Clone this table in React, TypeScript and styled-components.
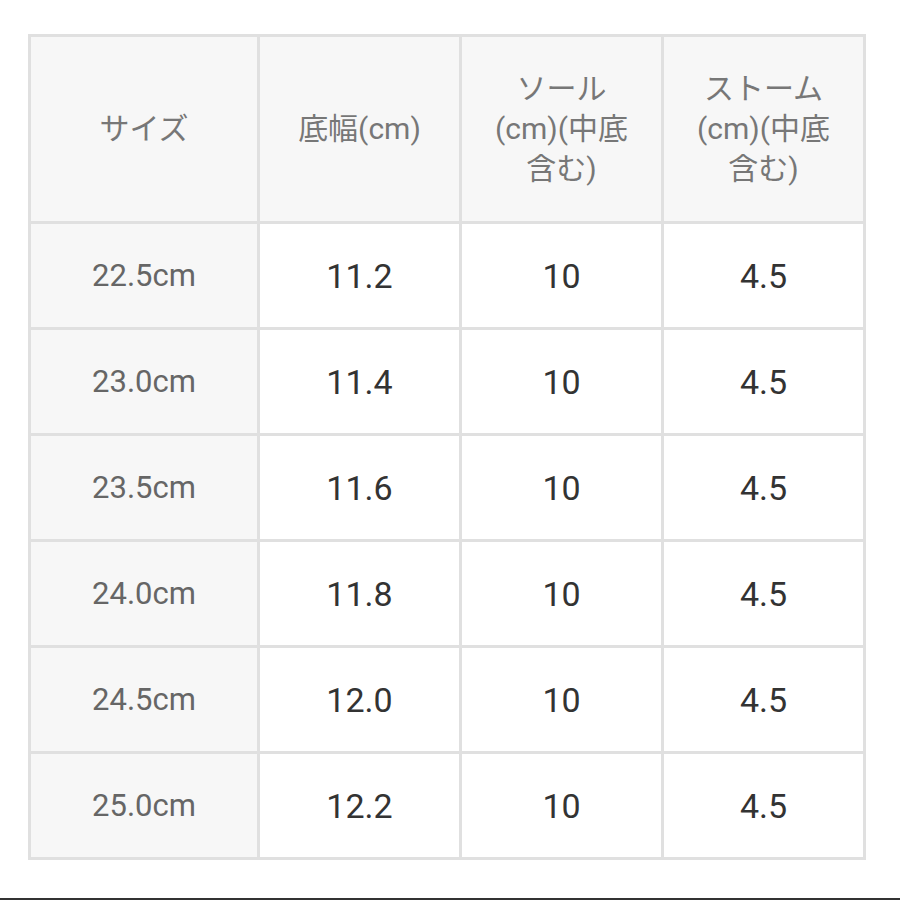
import styled, { createGlobalStyle } from 'styled-components';

const GlobalStyle = createGlobalStyle`
  html, body {
    margin: 0;
    padding: 0;
    background: #ffffff;
  }
  body {
    font-family: Roboto, "Noto Sans CJK JP", "Noto Sans", sans-serif;
  }
`;

const rows = [
  { size: '22.5cm', width: '11.2', sole: '10', storm: '4.5' },
  { size: '23.0cm', width: '11.4', sole: '10', storm: '4.5' },
  { size: '23.5cm', width: '11.6', sole: '10', storm: '4.5' },
  { size: '24.0cm', width: '11.8', sole: '10', storm: '4.5' },
  { size: '24.5cm', width: '12.0', sole: '10', storm: '4.5' },
  { size: '25.0cm', width: '12.2', sole: '10', storm: '4.5' },
];

const App = () => {
  return (
    <Page>
      <GlobalStyle />
      <SizeTable>
        <colgroup>
          <col style={{ width: 229 }} />
          <col style={{ width: 202 }} />
          <col style={{ width: 202 }} />
          <col style={{ width: 202 }} />
        </colgroup>
        <thead>
          <HeadRow>
            <HeadCell>サイズ</HeadCell>
            <HeadCell>底幅(cm)</HeadCell>
            <HeadCell>
              ソール
              <br />
              (cm)(中底
              <br />
              含む)
            </HeadCell>
            <HeadCell>
              ストーム
              <br />
              (cm)(中底
              <br />
              含む)
            </HeadCell>
          </HeadRow>
        </thead>
        <tbody>
          {rows.map((r) => (
            <BodyRow key={r.size}>
              <SizeCell>{r.size}</SizeCell>
              <ValueCell>{r.width}</ValueCell>
              <ValueCell>{r.sole}</ValueCell>
              <ValueCell>{r.storm}</ValueCell>
            </BodyRow>
          ))}
        </tbody>
      </SizeTable>
      <BottomRule />
    </Page>
  );
};

export default App;

const Page = styled.div`
  width: 900px;
  height: 900px;
  padding: 34px 0 0 28px;
  box-sizing: border-box;
  display: flex;
  flex-direction: column;
  overflow: hidden;
`;

const SizeTable = styled.table`
  width: 836px;
  table-layout: fixed;
  border-collapse: collapse;
  border: 3px solid #e0e0e0;
`;

const HeadRow = styled.tr`
  height: 187px;
`;

const BodyRow = styled.tr`
  height: 106px;
`;

const Cell = styled.td`
  border: 3px solid #e0e0e0;
  text-align: center;
  vertical-align: middle;
  padding: 0;
`;

const HeadCell = styled(Cell).attrs({ as: 'th' })`
  background: #f7f7f7;
  color: #777777;
  font-weight: 400;
  font-size: 30px;
  line-height: 40px;
`;

const SizeCell = styled(Cell)`
  background: #f7f7f7;
  color: #666666;
  font-size: 31px;
`;

const ValueCell = styled(Cell)`
  background: #ffffff;
  color: #333333;
  font-size: 34px;
`;

const BottomRule = styled.div`
  margin-top: auto;
  margin-left: -28px;
  width: 900px;
  height: 2px;
  background: #333333;
`;
